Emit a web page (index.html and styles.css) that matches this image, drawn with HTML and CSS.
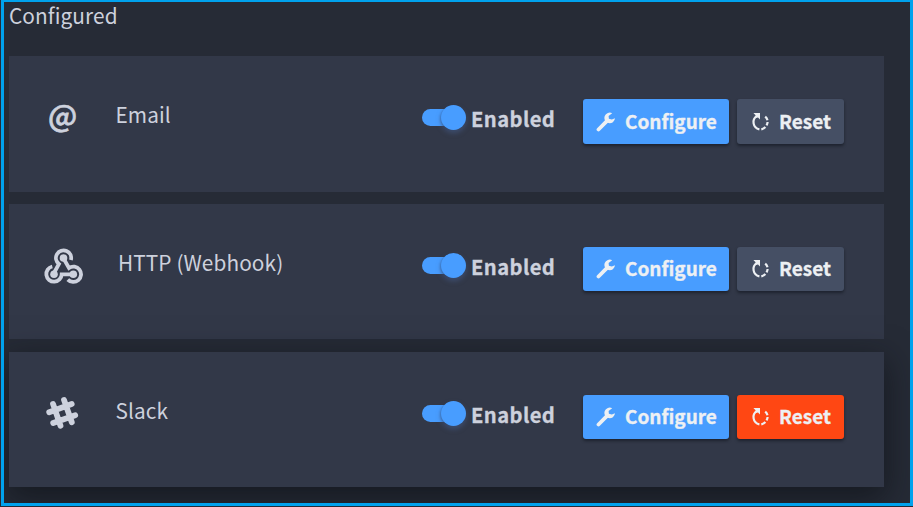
FILE: index.html
```
<!DOCTYPE html>
<html lang="en">
<head>
<meta charset="utf-8">
<title>Configured</title>
<link rel="stylesheet" href="styles.css">
</head>
<body>
<svg class="defs" width="0" height="0">
  <symbol id="wrench" viewBox="0 0 20 20">
    <path d="M2.5 17.5 10.8 9.2" fill="none" stroke="currentColor" stroke-width="3.8" stroke-linecap="round"/>
    <path d="M16.2 1.2A5.3 5.3 0 1 0 19 6.3L15.8 7.5 12.9 6.8 12.6 4Z" fill="currentColor"/>
  </symbol>
  <symbol id="reset" viewBox="0 0 18 20">
    <path d="M6 3.9A7.3 7.3 0 0 0 8.4 17.3" fill="none" stroke="currentColor" stroke-width="2.2"/>
    <path d="M10.3 17.3A7.4 7.4 0 0 0 14.4 15M15.5 13.4A7.4 7.4 0 0 0 16.6 10M16.5 8.2A7.4 7.4 0 0 0 14.2 4.7" fill="none" stroke="currentColor" stroke-width="2.2"/>
    <path d="M2.4 1H9V7.6L7 5.6 4.6 6 4.6 3.2Z" fill="currentColor"/>
  </symbol>
</svg>
<main class="panel">
  <h1 class="title">Configured</h1>
  <div class="cards">
    <section class="card first">
      <div class="icon at">@</div>
      <div class="name">Email</div>
      <div class="toggle"><span class="track"><span class="knob"></span></span><span class="state">Enabled</span></div>
      <button class="btn configure"><svg class="wrench"><use href="#wrench"/></svg><span>Configure</span></button>
      <button class="btn reset"><svg class="arrow"><use href="#reset"/></svg><span>Reset</span></button>
    </section>
    <section class="card">
      <div class="icon">
        <svg width="40" height="38" viewBox="0 0 40 38" fill="none" stroke="currentColor" stroke-width="3.8">
          <path d="M27.9 13A7.6 7.6 0 1 0 15.9 17L11 26"/>
          <path d="M9.3 19.5A7.7 7.7 0 1 0 18.7 27.3H30"/>
          <path d="M20 10.5 26 20.9A7.7 7.7 0 1 1 24.8 32.6"/>
          <g fill="currentColor" stroke="none"><circle cx="20.5" cy="11" r="3.8"/><circle cx="11" cy="27.3" r="3.8"/><circle cx="30.3" cy="27.3" r="3.8"/></g>
        </svg>
      </div>
      <div class="name indent">HTTP (Webhook)</div>
      <div class="toggle"><span class="track"><span class="knob"></span></span><span class="state">Enabled</span></div>
      <button class="btn configure"><svg class="wrench"><use href="#wrench"/></svg><span>Configure</span></button>
      <button class="btn reset"><svg class="arrow"><use href="#reset"/></svg><span>Reset</span></button>
    </section>
    <section class="card raised">
      <div class="icon slack">
        <svg width="36" height="36" viewBox="0 0 36 36" fill="none" stroke="currentColor" stroke-width="5.8" stroke-linecap="round">
          <path d="M9 8.9 16.5 30.8M20 4.9 27.8 27.3M5.2 17.2 27.7 9.1M9.2 28 31.2 20.2"/>
        </svg>
      </div>
      <div class="name">Slack</div>
      <div class="toggle"><span class="track"><span class="knob"></span></span><span class="state">Enabled</span></div>
      <button class="btn configure"><svg class="wrench"><use href="#wrench"/></svg><span>Configure</span></button>
      <button class="btn reset danger"><svg class="arrow"><use href="#reset"/></svg><span>Reset</span></button>
    </section>
  </div>
</main>
</body>
</html>
```
FILE: styles.css
```
* { box-sizing: border-box; }
body {
  margin: 0;
  height: 507px;
  padding: 0 0 1px 1px;
  overflow: hidden;
  background: #262b36;
  color: #cdd1dd;
  font-family: "Noto Sans CJK SC", "Open Sans", sans-serif;
}
.defs { display: block; height: 0; }
.panel {
  height: 506px;
  border: 3px solid #00a2ed;
  border-top-width: 2px;
  padding-left: 5px;
  background: #262b36;
  overflow: hidden;
}
.title {
  margin: 0;
  height: 54px;
  font-size: 20.8px;
  line-height: 27px;
  font-weight: 400;
  letter-spacing: 0.1px;
}
.cards { display: flex; flex-direction: column; width: 875px; }
.card {
  display: flex;
  align-items: flex-start;
  height: 135px;
  padding: 43px 40px 0 34px;
  background: #323848;
}
.first { height: 136px; margin-bottom: 12px; }
.raised { margin-top: 13px; box-shadow: 0 10px 30px 2px rgba(12, 15, 20, 0.6); }
.icon {
  width: 72px;
  height: 40px;
  display: flex;
}
.at {
  padding-left: 5px;
  font-size: 30px;
  line-height: 31px;
  font-weight: 500;
  -webkit-text-stroke: 0.7px currentColor;
}
.slack { padding-left: 1px; }
.name {
  width: 307px;
  font-size: 20.8px;
  line-height: 31px;
  letter-spacing: 0.1px;
  padding-left: 0.5px;
}
.indent { padding-left: 3px; }
.toggle { display: flex; width: 161px; }
.track {
  width: 44px;
  height: 17px;
  margin: 10px 5px 0 0;
  display: flex;
  justify-content: flex-end;
  align-items: center;
  background: linear-gradient(#489dff, #489dff) 0 0 / 34px 17px no-repeat;
  border-radius: 9px;
}
.knob {
  width: 25px;
  height: 25px;
  flex: none;
  border-radius: 50%;
  background: #489dff;
  box-shadow: 0 3px 5px rgba(72, 95, 140, 0.6), -1px 1px 2px rgba(20, 35, 65, 0.25);
}
.state {
  font-size: 20.2px;
  line-height: 40px;
  font-weight: 700;
  letter-spacing: 0.4px;
  -webkit-text-stroke: 0.3px currentColor;
}
.btn {
  height: 44px;
  display: flex;
  align-items: center;
  border: 0;
  border-radius: 3px;
  padding: 0 0 0 13px;
  color: #edf0f3;
  font: 700 19px/44px "Noto Sans CJK SC", "Open Sans", sans-serif;
  -webkit-text-stroke: 0.3px currentColor;
  box-shadow: 0 2px 3px rgba(10, 14, 22, 0.5);
}
.btn span { margin-top: -3px; }
.first .btn { height: 45px; }
.first .btn span { margin-top: -1px; }
.configure { width: 146px; margin-right: 8px; background: #489dff; }
.reset { width: 107px; background: #454f64; }
.danger { background: #ff4713; }
.wrench { width: 20px; height: 20px; margin-right: 9px; flex: none; }
.arrow { width: 18px; height: 20px; margin: 0 10px 0 1px; flex: none; }
```
